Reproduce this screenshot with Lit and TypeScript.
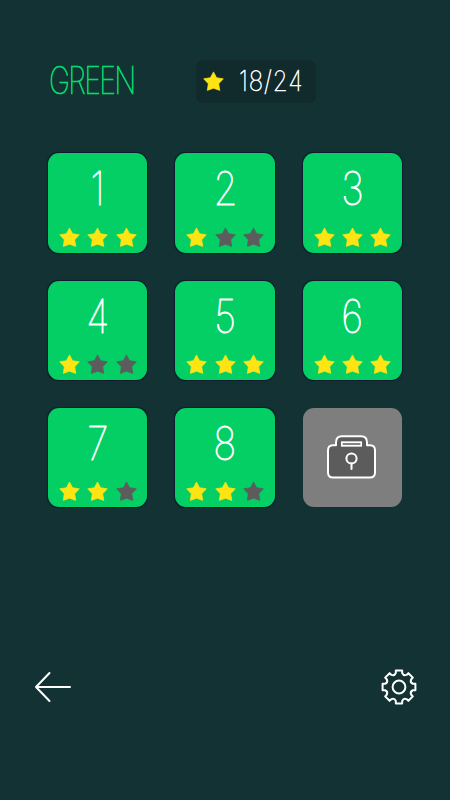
import { LitElement, html, svg, css } from "lit";
import { customElement, property } from "lit/decorators.js";

const STAR_PATH =
  "M10.5 .9 L13.6 6.7 L20.3 7.8 L15.7 12.8 L16.8 19.4 L10.5 17.2 L4.3 19.4 L5.3 12.8 L.7 7.8 L7.4 6.7 Z";

@customElement("rating-star")
class RatingStar extends LitElement {
  @property({ type: Boolean }) earned = false;

  static styles = css`
    :host { display: block; width: 21px; height: 21px; }
    svg { display: block; }
    .star { fill: #5c5c5c; stroke: #5c5c5c; stroke-width: 0.7; stroke-linejoin: round; }
    .earned { fill: #ffe414; stroke: #ffe414; }
  `;

  render() {
    return html`<svg width="21" height="21" viewBox="0 0 21 21">
      ${svg`<path class=${this.earned ? "star earned" : "star"} d=${STAR_PATH} />`}
    </svg>`;
  }
}

@customElement("level-tile")
class LevelTile extends LitElement {
  @property({ type: Number }) level = 0;
  @property({ type: Number }) stars = 0;
  @property({ type: Boolean }) locked = false;

  static styles = css`
    :host { display: block; }
    .tile {
      box-sizing: border-box;
      width: 99.25px;
      height: 99.25px;
      border-radius: 11px;
      background: #03cf65;
      box-shadow: 0 0 1px 0.5px #101a30;
      display: flex;
      flex-direction: column;
      align-items: center;
    }
    .locked { background: #7e7e7e; box-shadow: none; justify-content: center; }
    .number {
      font: 100 46.5px/48px Inter, "Liberation Sans", sans-serif;
      -webkit-text-stroke: 0.9px #fff;
      color: #fff;
      margin-top: 11px;
      transform: scaleX(0.83);
    }
    .stars { display: flex; gap: 7.25px; margin-top: 14.4px; }
  `;

  render() {
    if (this.locked) {
      return html`<div class="tile locked">
        <svg width="50" height="44" viewBox="0 0 50 44" fill="none" stroke="#fff" stroke-width="2" stroke-linejoin="round" stroke-linecap="round">
          <path fill="#5c5c5c" d="M9 10.3V7.5Q9 1.2 15 1.2H34Q40 1.2 40 7.5V10.3H43Q48 10.3 48 15.3V37.5Q48 42.5 43 42.5H6Q1 42.5 1 37.5V15.3Q1 10.3 6 10.3Z" />
          <rect x="14.8" y="7.2" width="19.4" height="3.6" fill="#7e7e7e" stroke-linejoin="miter" stroke-width="1.7" />
          <circle cx="24.5" cy="23.5" r="5.1" />
          <path d="M24.5 28.6V34" />
        </svg>
      </div>`;
    }
    return html`<div class="tile">
      <span class="number">${this.level}</span>
      <div class="stars">
        ${[1, 2, 3].map((n) => html`<rating-star ?earned=${n <= this.stars}></rating-star>`)}
      </div>
    </div>`;
  }
}

@customElement("app-root")
class AppRoot extends LitElement {
  private levels = [3, 1, 3, 1, 3, 3, 2, 2];

  static styles = css`
    :host {
      box-sizing: border-box;
      display: flex;
      flex-direction: column;
      width: 450px;
      height: 800px;
      background: #133234;
      overflow: hidden;
      font-family: Inter, "Liberation Sans", sans-serif;
      font-weight: 100;
    }
    .header { display: flex; align-items: center; height: 43px; margin: 60px 0 0 48px; }
    .title { width: 148px; font-size: 37.5px; line-height: 41px; margin-bottom: 2px; color: #03e070; }
    .title span {
      display: inline-block;
      margin-left: 0.8px;
      letter-spacing: -2.2px;
      transform-origin: left;
      transform: scaleX(0.76);
      -webkit-text-stroke: 0.7px #03e070;
    }
    .score {
      box-sizing: border-box;
      display: flex;
      align-items: center;
      width: 120px;
      height: 42.5px;
      padding-left: 7px;
      border-radius: 7px;
      background: #112a2c;
      color: #fff;
      font-size: 28px;
      line-height: 43px;
    }
    .score span {
      margin: 0 0 0 14.6px;
      letter-spacing: 1.1px;
      transform-origin: left;
      transform: scaleX(0.86);
      -webkit-text-stroke: 0.6px #fff;
    }
    .levels {
      display: grid;
      grid-template-columns: repeat(3, 99.25px);
      gap: 28px;
      margin: 50.3px 0 0 48.2px;
    }
    .footer {
      display: flex;
      justify-content: space-between;
      align-items: center;
      height: 38px;
      margin: auto 32.5px 93.8px 34px;
    }
    .icon { display: block; fill: none; stroke: #fff; stroke-width: 2; stroke-linecap: round; stroke-linejoin: round; }
  `;

  private gearPath() {
    const point = (a: number, radius: number) =>
      `${(19 + radius * Math.cos(a)).toFixed(2)} ${(19 + radius * Math.sin(a)).toFixed(2)}`;
    let d = "";
    for (let i = 0; i < 8; i++) {
      const a = (i * Math.PI) / 4 - Math.PI / 2;
      d += `${i ? "L" : "M"}${point(a - 0.23, 14.2)}L${point(a - 0.19, 16.7)}L${point(a + 0.19, 16.7)}L${point(a + 0.23, 14.2)}`;
      d += `Q${point(a + Math.PI / 8, 11.8)} ${point(a + Math.PI / 4 - 0.23, 14.2)}`;
    }
    return d + "Z";
  }

  render() {
    return html`
      <div class="header">
        <div class="title"><span>GREEN</span></div>
        <div class="score"><rating-star earned></rating-star><span>18/24</span></div>
      </div>
      <div class="levels">
        ${this.levels.map((stars, i) => html`<level-tile .level=${i + 1} .stars=${stars}></level-tile>`)}
        <level-tile locked></level-tile>
      </div>
      <div class="footer">
        <svg class="icon" width="38" height="32" viewBox="0 0 38 32"><path d="M36 16H2M15.5 2L2 16L15.5 30" /></svg>
        <svg class="icon" width="38" height="38" viewBox="0 0 38 38"><path d=${this.gearPath()} /><circle cx="19" cy="19" r="6.4" /></svg>
      </div>
    `;
  }
}
